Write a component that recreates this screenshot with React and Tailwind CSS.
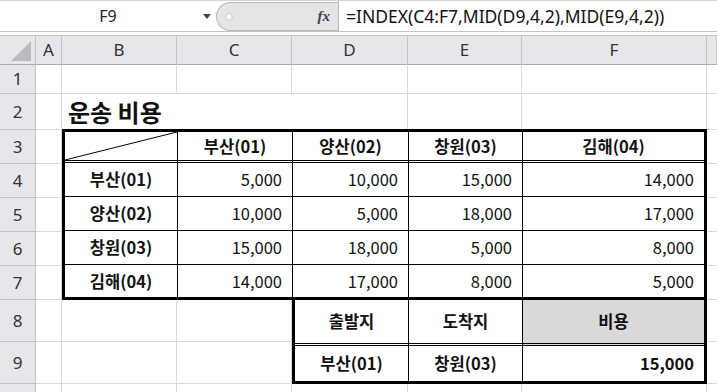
import React from 'react';

const KR = { fontFamily: '"Noto Sans CJK KR", "Noto Sans", sans-serif' };

const cols = ['A', 'B', 'C', 'D', 'E', 'F', ''];
const sheetRows = ['', '1', '2', '3', '4', '5', '6', '7', '8', '9', null];

const places = ['부산(01)', '양산(02)', '창원(03)', '김해(04)'];
const costs = [
  ['5,000', '10,000', '15,000', '14,000'],
  ['10,000', '5,000', '18,000', '17,000'],
  ['15,000', '18,000', '5,000', '8,000'],
  ['14,000', '17,000', '8,000', '5,000'],
];

// same track sizes for the sheet and the layer that holds the tables
const tracks = 'grid grid-cols-[36px_26px_115px_115px_116px_114px_185px_1fr] grid-rows-[29px_29px_36px_34px_34px_34px_34px_34px_42px_42px_1fr]';

const Toolbar = () => (
  <div className="h-[36px] flex flex-col bg-white">
    <div className="h-[31px] flex items-stretch border-t border-[#d4d4d4]">
      <div className="w-[216px] relative flex items-center justify-center text-[16px] text-[#222] font-['Noto_Sans',sans-serif]">
        F9
        <span className="absolute right-[5px] top-[13px] w-0 h-0 border-l-[4px] border-r-[4px] border-t-[5px] border-l-transparent border-r-transparent border-t-[#444]" />
      </div>
      <div className="w-[122px] mt-[1px] flex items-center bg-[#e4e5e7] border border-r-0 border-[#b9b9b9] rounded-l-[16px]">
        <span className="ml-[8px] w-[8px] h-[8px] rounded-full bg-[#f5f5f5] border border-[#cfcfcf]" />
        <span className="ml-auto mr-[8px] italic font-bold text-[15px] text-[#444] font-['Liberation_Serif',serif]">fx</span>
      </div>
      <div className="flex-1 border-l border-[#b9b9b9] flex items-center pl-[7px] text-[17.5px] text-[#111] font-['Noto_Sans',sans-serif]">
        =INDEX(C4:F7,MID(D9,4,2),MID(E9,4,2))
      </div>
    </div>
    <div className="flex-1 border-t border-b border-[#c4c4c4] bg-white" />
  </div>
);

// one background cell of the sheet
const SheetCell = ({ r, c }) => {
  const label = sheetRows[r];
  const last = label === null;
  if (r === 0 && c === 0) {
    return (
      <div className="relative bg-[#e6e7ea] border-r border-b border-r-[#c4c4c4] border-b-[#a9abae]">
        <svg className="absolute right-[4px] bottom-[3px]" width="20" height="20"><polygon points="20,0 20,20 0,20" fill="#b9bbbe" /></svg>
      </div>
    );
  }
  if (r === 0) {
    return (
      <div className="bg-[#e6e7ea] border-r border-b border-r-[#c4c4c4] border-b-[#a9abae] flex items-center justify-center text-[17px] text-[#333] font-['Noto_Sans',sans-serif]">
        {cols[c - 1]}
      </div>
    );
  }
  if (c === 0) {
    return (
      <div className={`bg-[#e6e7ea] border-r border-[#c4c4c4] flex items-center justify-center text-[17px] text-[#333] font-['Noto_Sans',sans-serif] ${last ? '' : 'border-b'}`}>
        {label}
      </div>
    );
  }
  return <div className={`bg-white border-[#dadada] ${c < 7 ? 'border-r' : ''} ${last ? '' : 'border-b'}`} />;
};

const MainTable = () => (
  <div className="col-start-3 col-end-8 row-start-4 row-end-9 -mt-[1px] border-[3px] border-black bg-white grid grid-cols-[113px_115px_116px_114px_1fr] grid-rows-[31px_34px_34px_34px_1fr] text-[16.5px] text-[#111]">
    <div className="relative border-r border-r-black border-b-[3px] border-b-black border-double">
      <svg className="absolute inset-0 w-full h-full" preserveAspectRatio="none" viewBox="0 0 100 100">
        <line x1="0" y1="100" x2="100" y2="0" stroke="#000" strokeWidth="1" vectorEffect="non-scaling-stroke" />
      </svg>
    </div>
    {places.map((p, i) => (
      <div key={p} className={`border-b-[3px] border-double border-black flex items-center justify-center font-bold ${i < 3 ? 'border-r' : ''}`}>
        {p}
      </div>
    ))}
    {places.map((p, r) => (
      <React.Fragment key={p}>
        <div className={`border-r border-black flex items-center justify-center font-bold ${r < 3 ? 'border-b' : ''}`}>{p}</div>
        {costs[r].map((c, i) => (
          <div key={i} className={`border-black flex items-center justify-end pr-[10px] ${i < 3 ? 'border-r' : ''} ${r < 3 ? 'border-b' : ''}`}>
            {c}
          </div>
        ))}
      </React.Fragment>
    ))}
  </div>
);

const LookupTable = () => (
  <div className="col-start-5 col-end-8 row-start-9 row-end-11 -mt-[3px] border-[3px] border-black bg-white grid grid-cols-[114px_114px_1fr] grid-rows-[46px_1fr] text-[16.5px] text-[#111] font-bold">
    <div className="border-r border-b-[3px] border-double border-black flex items-center justify-center">출발지</div>
    <div className="border-r border-b-[3px] border-double border-black flex items-center justify-center">도착지</div>
    <div className="bg-[#d9d9d9] border-b-[3px] border-double border-black flex items-center justify-center">비용</div>
    <div className="border-r border-black flex items-center justify-center">부산(01)</div>
    <div className="border-r border-black flex items-center justify-center">창원(03)</div>
    <div className="flex items-center justify-end pr-[10px]">15,000</div>
  </div>
);

export default function App() {
  return (
    <div className="w-[717px] h-[392px] overflow-hidden bg-white" style={KR}>
      <Toolbar />
      <div className="grid h-[356px]">
        {/* sheet grid */}
        <div className={`${tracks} col-start-1 row-start-1`}>
          {sheetRows.map((_, r) =>
            cols.concat(['x']).map((_, c) => <SheetCell key={`${r}-${c}`} r={r} c={c} />)
          )}
        </div>

        {/* cell content laid over the sheet */}
        <div className={`${tracks} col-start-1 row-start-1`}>
          {/* B2 title, overflowing into C2 */}
          <div className="col-start-3 col-end-5 row-start-3 bg-white border-b border-[#dadada] flex items-center pl-[6px] text-[24px] font-bold text-[#111]">
            운송 비용
          </div>
          <MainTable />
          <LookupTable />
        </div>
      </div>
    </div>
  );
}
